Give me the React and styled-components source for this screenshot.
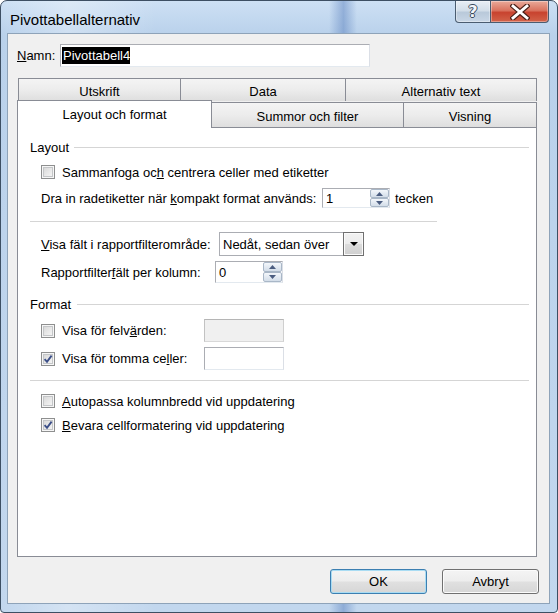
import React from 'react';
import styled, { createGlobalStyle } from 'styled-components';

const Global = createGlobalStyle`
  html, body { margin: 0; padding: 0; background: #ffffff; }
  body { font-family: "Liberation Sans", Arial, sans-serif; font-size: 13px; color: #000; }
  * { box-sizing: border-box; }
`;

const Window = styled.div`
  width: 558px;
  height: 613px;
  border: 1px solid #3d4f63;
  border-radius: 7px 7px 4px 4px;
  padding: 0 7px 8px 6px;
  display: flex;
  flex-direction: column;
  overflow: hidden;
  background:
    linear-gradient(90deg, rgba(255,255,255,0) 0%, rgba(255,255,255,0.3) 12%, rgba(255,255,255,0) 28%,
      rgba(80,120,185,0) 59%, rgba(80,120,185,0.45) 61.6%, rgba(80,120,185,0) 64%),
    linear-gradient(180deg, #cde0f4 0px, #b9d1eb 34px, #c2d7ee 100%);
`;

const TitleBar = styled.div`
  height: 32px;
  flex: none;
  display: flex;
  justify-content: space-between;
  align-items: flex-start;
`;

const Title = styled.div`
  margin: 10px 0 0 3px;
  font-size: 15px;
  line-height: 18px;
  color: #000;
`;

const Caption = styled.div`
  display: flex;
  margin-right: 1px;
`;

const CapButton = styled.div`
  width: ${p => p.$w}px;
  height: 22px;
  display: flex;
  align-items: center;
  justify-content: center;
  border: 1px solid #4a5c70;
  border-top: none;
  border-radius: ${p => (p.$close ? '0 0 4px 0' : '0 0 0 4px')};
  margin-left: ${p => (p.$close ? '-1px' : '0')};
  background: ${p =>
    p.$close
      ? 'linear-gradient(180deg, #e9aa9a 0%, #d9735f 45%, #c8432f 55%, #d2634a 100%)'
      : 'linear-gradient(180deg, #e8eef5 0%, #d3dee9 45%, #b9c9da 55%, #c9d7e6 100%)'};
  box-shadow: inset 0 0 0 1px rgba(255,255,255,0.35);
`;

const HelpGlyph = styled.span`
  font-family: "DejaVu Sans", sans-serif;
  font-weight: bold;
  font-size: 16px;
  line-height: 16px;
  color: #f3f6fa;
  text-shadow: 1px 0 #3a4a5d, -1px 0 #3a4a5d, 0 1px #3a4a5d, 0 -1px #3a4a5d;
`;

const Client = styled.div`
  flex: 1;
  border: 1px solid #8ea3b9;
  background: #f0f0f0;
  display: flex;
  flex-direction: column;
  padding: 10px 10px 9px 9px;
`;

const NameRow = styled.div`
  display: flex;
  align-items: center;
  height: 23px;
`;

const NameLabel = styled.span`
  width: 43px;
  flex: none;
`;

const TextField = styled.div`
  width: ${p => p.$w}px;
  height: ${p => p.$h}px;
  flex: none;
  border: 1px solid ${p => (p.$disabled ? '#c2c2c2' : '#abadb3')};
  border-top-color: ${p => (p.$disabled ? '#b5b5b5' : '#abadb3')};
  border-right-color: ${p => (p.$disabled ? '#cfcfcf' : '#dbdfe6')};
  border-bottom-color: ${p => (p.$disabled ? '#d8d8d8' : '#e3e9ef')};
  background: ${p => (p.$disabled ? '#f0f0f0' : '#ffffff')};
  display: flex;
  align-items: center;
  padding-left: 1px;
`;

const Selected = styled.span`
  background: #000;
  color: #fff;
  line-height: 17px;
  padding: 0 0 0 1px;
`;

const TabArea = styled.div`
  margin-top: 11px;
  width: 520px;
  display: flex;
  flex-direction: column;
`;

const TabRow = styled.div`
  display: flex;
  align-items: flex-end;
  height: ${p => p.$h}px;
  padding-left: ${p => p.$indent}px;
`;

const Tab = styled.div`
  width: ${p => p.$w}px;
  height: ${p => (p.$active ? 28 : p.$h)}px;
  margin-left: ${p => (p.$first ? 0 : -1)}px;
  margin-bottom: ${p => (p.$active ? -1 : 0)}px;
  position: ${p => (p.$active ? 'relative' : 'static')};
  z-index: ${p => (p.$active ? 2 : 'auto')};
  border: 1px solid #898c95;
  border-bottom: none;
  background: ${p => (p.$active ? '#ffffff' : 'linear-gradient(180deg, #f4f4f4 0%, #ececec 50%, #dedede 100%)')};
  display: flex;
  align-items: center;
  justify-content: center;
  padding-top: ${p => (p.$active ? 0 : 2)}px;
  white-space: nowrap;
`;

const Panel = styled.div`
  height: 430px;
  border: 1px solid #898c95;
  background: #ffffff;
  display: flex;
  flex-direction: column;
  padding: 10px 7px 0 12px;
`;

const SectionHeader = styled.div`
  display: flex;
  align-items: center;
  height: 18px;
  flex: none;
  margin-top: ${p => p.$mt || 0}px;
`;

const HeaderLine = styled.div`
  flex: 1;
  height: 1px;
  background: #d5d5d5;
  margin-left: ${p => p.$ml || 5}px;
`;

const Separator = styled.div`
  flex: none;
  width: ${p => (p.$w ? p.$w + 'px' : '100%')};
  height: 1px;
  background: #d5d5d5;
  margin-top: ${p => p.$mt || 0}px;
`;

const Row = styled.div`
  display: flex;
  flex: none;
  align-items: center;
  height: ${p => p.$h || 24}px;
  margin-top: ${p => p.$mt || 0}px;
  margin-left: 11px;
  white-space: nowrap;
`;

const Label = styled.span`
  flex: none;
  width: ${p => (p.$w ? p.$w + 'px' : 'auto')};
  margin-left: ${p => p.$ml || 0}px;
`;

const U = styled.span`
  text-decoration: underline;
`;

const Box = styled.span`
  width: 14px;
  height: 14px;
  flex: none;
  border: 1px solid #8e8f8f;
  background: linear-gradient(135deg, #d2d2d2 0%, #e9e9e9 55%, #fafafa 100%);
  box-shadow: inset 0 0 0 1px #f6f6f6, inset 0 0 0 2px #c4c6c8;
  display: flex;
  align-items: center;
  justify-content: center;
  margin-right: 7px;
`;

const Spin = styled.div`
  width: 68px;
  height: ${p => p.$h}px;
  flex: none;
  border: 1px solid #abadb3;
  border-right-color: #dbdfe6;
  border-bottom-color: #e3e9ef;
  background: #ffffff;
  display: flex;
`;

const SpinValue = styled.div`
  flex: 1;
  display: flex;
  align-items: center;
  padding-left: 3px;
`;

const SpinButtons = styled.div`
  width: 19px;
  display: flex;
  flex-direction: column;
`;

const SpinBtn = styled.div`
  flex: 1;
  border: 1px solid #a9b7c7;
  border-radius: 2px;
  background: linear-gradient(180deg, #f4f7fb 0%, #e3eaf2 50%, #d3dde8 100%);
  display: flex;
  align-items: center;
  justify-content: center;
`;

const Select = styled.div`
  width: 145px;
  height: 24px;
  flex: none;
  border: 1px solid #abadb3;
  border-right: none;
  background: #ffffff;
  display: flex;
`;

const SelectValue = styled.div`
  flex: 1;
  display: flex;
  align-items: center;
  padding-left: 3px;
`;

const SelectArrow = styled.div`
  width: 21px;
  margin: -1px 0;
  border: 1px solid #707070;
  background: linear-gradient(180deg, #f2f2f2 0%, #ebebeb 50%, #dcdcdc 51%, #cfcfcf 100%);
  box-shadow: inset 0 0 0 1px #fafafa;
  display: flex;
  align-items: center;
  justify-content: center;
`;

const ButtonRow = styled.div`
  display: flex;
  justify-content: flex-end;
  gap: 15px;
  margin-top: 12px;
  height: 25px;
`;

const DialogButton = styled.div`
  width: 97px;
  height: 25px;
  border: 1px solid ${p => (p.$default ? '#3c7fb1' : '#707070')};
  border-radius: 3px;
  background: linear-gradient(180deg, #f4f4f4 0%, #ededed 48%, #e0e0e0 52%, #d6d6d6 100%);
  box-shadow: inset 0 0 0 1px ${p => (p.$default ? '#a9dcf3' : '#fbfbfb')};
  display: flex;
  align-items: center;
  justify-content: center;
  font-size: 13px;
`;

const Check = ({ checked }) => (
  <Box>
    {checked && (
      <svg width="10" height="10" viewBox="0 0 10 10">
        <path d="M1.6 5.2 L4 7.8 L8.6 1.6" fill="none" stroke="#3c4f88" strokeWidth="1.9" />
      </svg>
    )}
  </Box>
);

const Tri = ({ up, color = '#4b5d80', w = 7, h = 4 }) => (
  <svg width={w} height={h} viewBox={`0 0 ${w} ${h}`}>
    <path d={up ? `M0 ${h} L${w / 2} 0 L${w} ${h} Z` : `M0 0 L${w} 0 L${w / 2} ${h} Z`} fill={color} />
  </svg>
);

const SpinField = ({ value, h }) => (
  <Spin $h={h}>
    <SpinValue>{value}</SpinValue>
    <SpinButtons>
      <SpinBtn><Tri up /></SpinBtn>
      <SpinBtn><Tri /></SpinBtn>
    </SpinButtons>
  </Spin>
);

export default function App() {
  return (
    <>
      <Global />
      <Window>
        <TitleBar>
          <Title>Pivottabellalternativ</Title>
          <Caption>
            <CapButton $w={36}>
              <HelpGlyph>?</HelpGlyph>
            </CapButton>
            <CapButton $w={59} $close>
              <svg width="20" height="16" viewBox="0 0 20 16">
                <path d="M3 2 L17 14 M17 2 L3 14" stroke="#4a2018" strokeWidth="5.2" strokeLinecap="square" />
                <path d="M3 2 L17 14 M17 2 L3 14" stroke="#ffffff" strokeWidth="2.8" strokeLinecap="square" />
              </svg>
            </CapButton>
          </Caption>
        </TitleBar>
        <Client>
          <NameRow>
            <NameLabel><U>N</U>amn:</NameLabel>
            <TextField $w={310} $h={23}>
              <Selected>Pivottabell4</Selected>
            </TextField>
          </NameRow>
          <TabArea>
            <TabRow $h={23} $indent={1}>
              <Tab $w={163} $h={23} $first>Utskrift</Tab>
              <Tab $w={166} $h={23}>Data</Tab>
              <Tab $w={192} $h={23}>Alternativ text</Tab>
            </TabRow>
            <TabRow $h={26} $indent={0}>
              <Tab $w={195} $active $first>Layout och format</Tab>
              <Tab $w={193} $h={25}>Summor och filter</Tab>
              <Tab $w={134} $h={25}>Visning</Tab>
            </TabRow>
            <Panel>
              <SectionHeader>
                <span>Layout</span>
                <HeaderLine $ml={5} />
              </SectionHeader>
              <Row $mt={4}>
                <Check />
                <Label>Sammanfoga oc<U>h</U> centrera celler med etiketter</Label>
              </Row>
              <Row $mt={2}>
                <Label $w={281}>Dra in radetiketter när <U>k</U>ompakt format används:</Label>
                <SpinField value="1" h={20} />
                <Label $ml={5}>tecken</Label>
              </Row>
              <Separator $w={407} $mt={11} />
              <Row $mt={10}>
                <Label $w={178}><U>V</U>isa fält i rapportfilterområde:</Label>
                <Select>
                  <SelectValue>Nedåt, sedan över</SelectValue>
                  <SelectArrow><Tri color="#000" w={8} h={4} /></SelectArrow>
                </Select>
              </Row>
              <Row $mt={5} $h={22}>
                <Label $w={174}>Rapportfilter<U>f</U>ält per kolumn:</Label>
                <SpinField value="0" h={22} />
              </Row>
              <SectionHeader $mt={12}>
                <span>Format</span>
                <HeaderLine $ml={6} />
              </SectionHeader>
              <Row $mt={6} $h={23}>
                <Check />
                <Label $w={142}>Visa för felv<U>ä</U>rden:</Label>
                <TextField $w={80} $h={23} $disabled />
              </Row>
              <Row $mt={5} $h={23}>
                <Check checked />
                <Label $w={142}>Visa för tomma ce<U>l</U>ler:</Label>
                <TextField $w={80} $h={23} />
              </Row>
              <Separator $mt={10} />
              <Row $mt={8}>
                <Check />
                <Label><U>A</U>utopassa kolumnbredd vid uppdatering</Label>
              </Row>
              <Row>
                <Check checked />
                <Label><U>B</U>evara cellformatering vid uppdatering</Label>
              </Row>
            </Panel>
          </TabArea>
          <ButtonRow>
            <DialogButton $default>OK</DialogButton>
            <DialogButton>Avbryt</DialogButton>
          </ButtonRow>
        </Client>
      </Window>
    </>
  );
}
